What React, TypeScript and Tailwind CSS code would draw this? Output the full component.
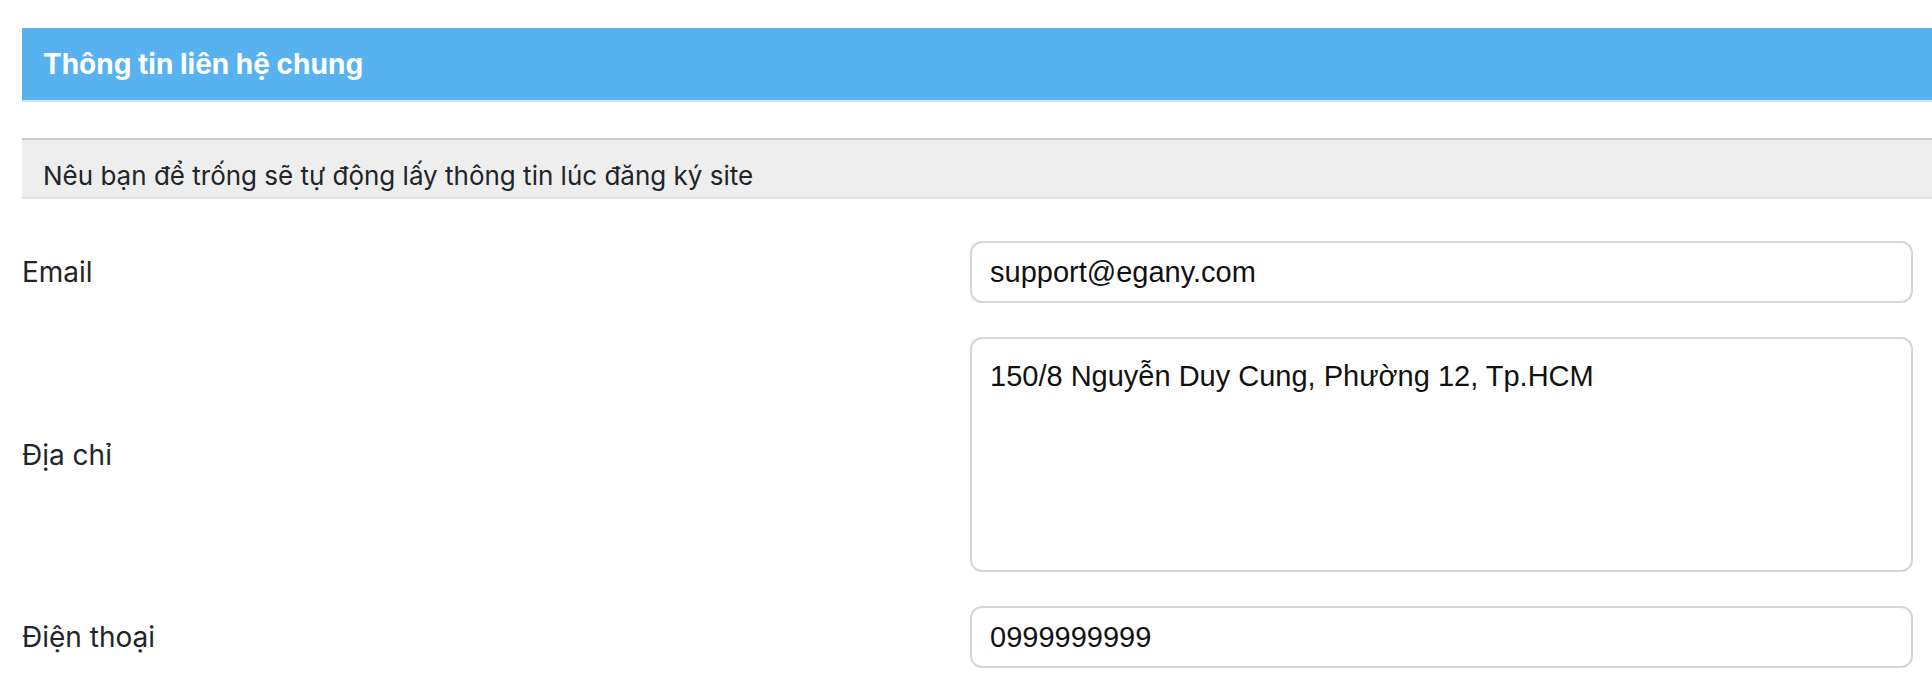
const fields = [
  { label: 'Email', value: 'support@egany.com', multiline: false },
  { label: 'Địa chỉ', value: '150/8 Nguyễn Duy Cung, Phường 12, Tp.HCM', multiline: true },
  { label: 'Điện thoại', value: '0999999999', multiline: false },
];

export default function App() {
  return (
    <div className="min-h-[684px] bg-white pt-[28px] pl-[22px] font-['Inter',sans-serif] text-[#212529]">
      {/* Tiêu đề */}
      <div className="flex h-[74px] items-center border-b-2 border-[#cfe5f7] bg-[#58b2ef] pl-[21px]">
        <h2 className="text-[28px] font-bold text-white">Thông tin liên hệ chung</h2>
      </div>

      {/* Ghi chú */}
      <div className="mt-[36px] flex h-[61px] items-center border-t-2 border-b-2 border-t-[#cccccc] border-b-[#e4e4e4] bg-[#eeeeee] pt-[14px] pl-[21px] text-[26px]">
        Nêu bạn để trống sẽ tự động lấy thông tin lúc đăng ký site
      </div>

      {/* Form */}
      <div className="mt-[42px] flex flex-col gap-[34px] pr-[19px]">
        {fields.map((field) => (
          <div key={field.label} className="flex items-center">
            <label className="w-[948px] shrink-0 text-[28px]">{field.label}</label>
            {field.multiline ? (
              <textarea
                defaultValue={field.value}
                className="h-[235px] flex-1 resize-none rounded-[12px] border-2 border-[#d6d6da] bg-white px-[18px] pt-[16px] font-['Liberation_Sans',Arial,sans-serif] text-[29px] leading-[1.5] text-[#111] outline-none"
              />
            ) : (
              <input
                type="text"
                defaultValue={field.value}
                className="h-[62px] flex-1 rounded-[12px] border-2 border-[#d6d6da] bg-white px-[18px] font-['Liberation_Sans',Arial,sans-serif] text-[29px] text-[#111] outline-none"
              />
            )}
          </div>
        ))}
      </div>
    </div>
  );
}
